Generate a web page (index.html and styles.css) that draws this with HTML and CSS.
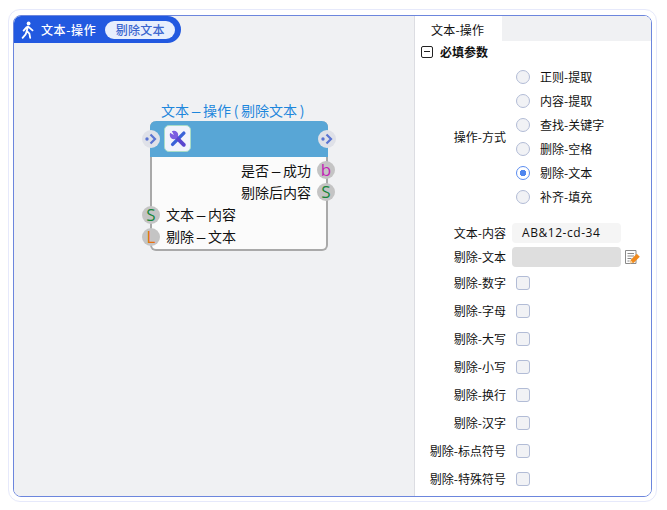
FILE: index.html
```html
<!DOCTYPE html>
<html lang="zh">
<head>
<meta charset="utf-8">
<title>文本-操作</title>
<link rel="stylesheet" href="styles.css">
</head>
<body>
<div class="halo">
  <div class="frame">
    <div class="canvas">
      <div class="badge">
        <svg class="walker" width="14" height="18" viewBox="0 0 14 18"><circle cx="7.600" cy="2.400" r="1.900" fill="#fff"/><path d="M7 5.400 5.600 10.400M7 5.400l4.500 4M7 5.400 5.200 6.600 2.600 9.600M5.800 10l2.600 2.600.8 4.200M5.600 10.600 4.600 13.400 1.600 16.800" fill="none" stroke="#fff" stroke-width="1.800" stroke-linecap="round" stroke-linejoin="round"/></svg>
        <span class="badge-title">文本-操作</span>
        <span class="pill">剔除文本</span>
      </div>
      <div class="node">
        <div class="node-title">文本<span class="dash">-</span>操作<span class="paren">(</span>剔除文本<span class="paren">)</span></div>
        <div class="node-box">
          <div class="node-head">
            <span class="tool">
              <svg width="18" height="18" viewBox="0 0 20 20"><path d="M16.500 3.500 4 16" stroke="#3a62d8" stroke-width="3.800" stroke-linecap="round" fill="none"/><path d="M6 6 16.500 16.500" stroke="#5a45cf" stroke-width="4.200" stroke-linecap="round" fill="none"/><circle cx="5.500" cy="5.500" r="4.700" fill="#7c5ce0"/><path d="M5.500 5.500 2.500 0 0 2.500z" fill="#f2f3fb"/></svg>
            </span>
            <span class="port port-in flow"><svg width="14" height="14" viewBox="0 0 14 14"><circle cx="3" cy="7" r="1.700" fill="#5a74d2"/><path d="M6.500 2.500 11 7l-4.500 4.500" fill="none" stroke="#5a74d2" stroke-width="2.200"/></svg></span>
            <span class="port port-out flow"><svg width="14" height="14" viewBox="0 0 14 14"><circle cx="3" cy="7" r="1.700" fill="#5a74d2"/><path d="M6.500 2.500 11 7l-4.500 4.500" fill="none" stroke="#5a74d2" stroke-width="2.200"/></svg></span>
          </div>
          <div class="node-row right"><span class="row-text">是否<span class="dash">-</span>成功</span><span class="port port-out pb">b</span></div>
          <div class="node-row right"><span class="row-text">剔除后内容</span><span class="port port-out ps">S</span></div>
          <div class="node-row"><span class="row-text">文本<span class="dash">-</span>内容</span><span class="port port-in ps">S</span></div>
          <div class="node-row"><span class="row-text">剔除<span class="dash">-</span>文本</span><span class="port port-in pl">L</span></div>
        </div>
      </div>
    </div>
    <div class="panel">
      <div class="tabs"><span class="tab">文本-操作</span></div>
      <div class="section"><span class="minus"></span><b>必填参数</b></div>
      <div class="radio-field">
        <span class="label">操作-方式</span>
        <div class="radios">
          <div class="radio-row"><span class="radio"></span>正则-提取</div>
          <div class="radio-row"><span class="radio"></span>内容-提取</div>
          <div class="radio-row"><span class="radio"></span>查找-关键字</div>
          <div class="radio-row"><span class="radio"></span>删除-空格</div>
          <div class="radio-row"><span class="radio on"></span>剔除-文本</div>
          <div class="radio-row"><span class="radio"></span>补齐-填充</div>
        </div>
      </div>
      <div class="input-row"><span class="label">文本-内容</span><span class="input">AB&amp;12-cd-34</span></div>
      <div class="input-row"><span class="label">剔除-文本</span><span class="input off"></span>
        <svg class="edit" width="16" height="16" viewBox="0 0 16 16"><path d="M1.500 1.500h10.500v13H1.500z" fill="#fdfdfd" stroke="#8a8a8a"/><path d="M3.500 4.500h6.500M3.500 7h6.500M3.500 9.500h4M3.500 12h2" stroke="#8a8a8a"/><path d="M5.800 14.500 6.800 10.800 12.800 4.800 15.800 7.800 9.800 13.800z" fill="#f08a1d"/><path d="M5.800 14.500 6.800 11.500 8.800 13.500z" fill="#f9dfb5"/></svg>
      </div>
      <div class="checks">
        <div class="check-row"><span class="label">剔除-数字</span><span class="check"></span></div>
        <div class="check-row"><span class="label">剔除-字母</span><span class="check"></span></div>
        <div class="check-row"><span class="label">剔除-大写</span><span class="check"></span></div>
        <div class="check-row"><span class="label">剔除-小写</span><span class="check"></span></div>
        <div class="check-row"><span class="label">剔除-换行</span><span class="check"></span></div>
        <div class="check-row"><span class="label">剔除-汉字</span><span class="check"></span></div>
        <div class="check-row"><span class="label">剔除-标点符号</span><span class="check"></span></div>
        <div class="check-row"><span class="label">剔除-特殊符号</span><span class="check"></span></div>
      </div>
    </div>
  </div>
</div>
</body>
</html>
```
FILE: styles.css
```css
* { box-sizing: border-box; }
html, body { margin: 0; height: 100%; background: #fff; }
body {
  padding: 9px 10px 8px 8px;
  font: 12px/16px "Noto Sans CJK SC", "Noto Sans", sans-serif;
  color: #111;
}
.halo {
  height: 493px;
  padding: 5px 4px 4px 4px;
  border: 1px solid #e6e9fb;
  border-radius: 12px;
}
.frame {
  display: flex;
  height: 482px;
  border: 1px solid #6c86dd;
  border-radius: 8px;
  overflow: hidden;
}
.canvas {
  position: relative;
  width: 400px;
  flex: none;
  background: #f0f1f3;
}
.badge {
  display: flex;
  align-items: center;
  height: 27px;
  width: 167px;
  padding-left: 7px;
  background: #2259e0;
  border-radius: 0 14px 14px 0;
  color: #fff;
  font-weight: 500;
}
.walker { flex: none; }
.badge-title { margin-left: 6px; letter-spacing: .6px; }
.pill {
  margin-left: 9px;
  width: 70px;
  height: 18px;
  line-height: 18px;
  text-align: center;
  background: #e8effd;
  color: #3b66cf;
  border-radius: 9px;
  letter-spacing: .3px;
}
.node { position: absolute; left: 136px; top: 84px; width: 178px; }
.node-title { padding: 0 0 1px 11px; color: #1d86dc; font-size: 14px; line-height: 20px; white-space: nowrap; }
.dash { display: inline-block; width: 14px; text-align: center; transform: scaleX(2.400); }
.paren { display: inline-block; width: 10px; text-align: center; }
.node-box {
  position: relative;
  height: 130px;
  background: #fbfbfb;
  border: 2px solid #a9a9a9;
  border-top: 0;
  border-radius: 6px;
  font-size: 14px;
  color: #111;
}
.node-head {
  position: relative;
  height: 36px;
  margin: 0 -2px 3px;
  background: #58a6d6;
  border-radius: 6px 6px 0 0;
}
.tool {
  position: absolute;
  left: 14px;
  top: 4px;
  width: 27px;
  height: 27px;
  display: flex;
  align-items: center;
  justify-content: center;
  background: #f2f3fb;
  border: 1px solid #a9dcc8;
  border-radius: 5px;
}
.node-row { position: relative; height: 22px; line-height: 20px; padding-left: 14px; white-space: nowrap; }
.node-row.right { padding: 0 15px 0 0; text-align: right; }
.row-text { display: inline-block; }
.port {
  position: absolute;
  width: 18px;
  height: 18px;
  border-radius: 50%;
  background: #c4c4c4;
  display: flex;
  align-items: center;
  justify-content: center;
  font-family: "Open Sans", sans-serif;
  font-size: 17px;
  font-weight: 500;
  line-height: 18px;
}
.port-in { left: -10px; top: 2px; }
.port-out { right: -9px; top: 1px; }
.node-head .port-in { left: -8px; top: 9px; }
.node-head .port-out { right: -8px; top: 9px; }
.flow { background: #dfe1e8; }
.pb { color: #c21fb5; }
.ps { color: #17863a; }
.pl { color: #e8720c; }
.panel { flex: 1; border-left: 1px solid #dcdde2; background: #fff; }
.tabs { height: 25px; background: #f0f1f3; }
.tab {
  display: block;
  width: 87px;
  height: 25px;
  padding-left: 16px;
  line-height: 28px;
  letter-spacing: .2px;
  background: #fff;
}
.section {
  display: flex;
  align-items: center;
  gap: 7px;
  height: 22px;
  padding-left: 6px;
}
.section b { font-weight: 700; }
.minus {
  position: relative;
  width: 12px;
  height: 12px;
  border: 1px solid #222;
  border-radius: 2px;
}
.minus::after {
  content: "";
  position: absolute;
  left: 2px;
  right: 2px;
  top: 4px;
  height: 1px;
  background: #222;
}
.label { flex: none; width: 91px; text-align: right; white-space: nowrap; }
.radio-field { display: flex; align-items: center; height: 144px; margin-top: 2px; margin-bottom: 14px; }
.radios { margin-left: 10px; }
.radio-row { display: flex; align-items: center; height: 24px; gap: 10px; }
.radio {
  width: 14px;
  height: 14px;
  border: 1.500px solid #b2bcd6;
  border-radius: 50%;
  background: #f1f2f5;
}
.radio.on {
  border-color: #5b8df0;
  background: radial-gradient(circle, #4f86ee 0 3px, #fff 3.500px);
}
.input-row { display: flex; align-items: center; height: 20px; margin-bottom: 4px; }
.input {
  margin-left: 6px;
  width: 109px;
  height: 20px;
  line-height: 20px;
  padding-left: 10px;
  background: #f5f5f5;
  border-radius: 4px;
  font-family: "Open Sans", "Noto Sans CJK SC", sans-serif;
  letter-spacing: .55px;
}
.input.off { background: #dedede; }
.edit { margin-left: 3px; flex: none; }
.checks { margin-top: -2px; }
.check-row { display: flex; align-items: center; height: 28px; }
.check {
  margin-left: 10px;
  width: 14px;
  height: 14px;
  border: 1.500px solid #b2bcd6;
  border-radius: 3px;
  background: #f1f2f5;
}
```
